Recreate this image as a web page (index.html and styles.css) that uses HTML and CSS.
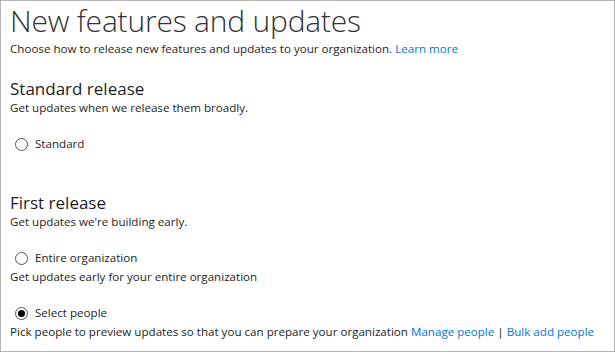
FILE: index.html
```html
<!DOCTYPE html>
<html lang="en">
<head>
    <meta charset="UTF-8">
    <meta name="viewport" content="width=device-width, initial-scale=1.0">
    <title>New features and updates</title>
    <link rel="stylesheet" href="styles.css">
</head>
<body>
    <div class="panel">
        <h1>New features and updates</h1>
        <p class="intro">Choose how to release new features and updates to your organization. <a href="#">Learn more</a></p>

        <section class="release standard">
            <h2>Standard release</h2>
            <p>Get updates when we release them broadly.</p>
            <label class="option"><span class="radio"></span>Standard</label>
        </section>

        <section class="release first">
            <h2>First release</h2>
            <p>Get updates we're building early.</p>
            <label class="option"><span class="radio"></span>Entire organization</label>
            <p class="hint">Get updates early for your entire organization</p>
            <label class="option"><span class="radio checked"></span>Select people</label>
            <p class="hint">Pick people to preview updates so that you can prepare your organization <a href="#">Manage people</a> | <a href="#">Bulk add people</a></p>
        </section>
    </div>
</body>
</html>
```

FILE: styles.css
```css
* {
    margin: 0;
    padding: 0;
    box-sizing: border-box;
}

body {
    font-family: 'Open Sans', 'Noto Sans', sans-serif;
    color: #1e1e1e;
    background: #fff;
}

.panel {
    width: 615px;
    height: 352px;
    border: 1px solid #b4b4b4;
    padding: 0 9px;
}

h1 {
    font-size: 30px;
    font-weight: 300;
    line-height: 40px;
    letter-spacing: -0.2px;
    color: #333;
}

p {
    font-size: 11.6px;
    line-height: 16px;
}

a {
    color: #0078d7;
    text-decoration: none;
}

.intro {
    line-height: 15px;
}

h2 {
    font-size: 17px;
    font-weight: 400;
    line-height: 22px;
}

.standard {
    margin-top: 22px;
}

.first {
    margin-top: 40px;
}

.option {
    display: flex;
    align-items: center;
    gap: 7px;
    font-size: 11.6px;
    line-height: 16px;
    padding-left: 5px;
    margin-top: 20px;
}

.hint {
    margin-top: 3px;
}

.radio {
    width: 13px;
    height: 13px;
    border: 1px solid #555;
    border-radius: 50%;
    display: flex;
    align-items: center;
    justify-content: center;
}

.radio.checked::after {
    content: "";
    width: 7px;
    height: 7px;
    border-radius: 50%;
    background: #000;
}
```
